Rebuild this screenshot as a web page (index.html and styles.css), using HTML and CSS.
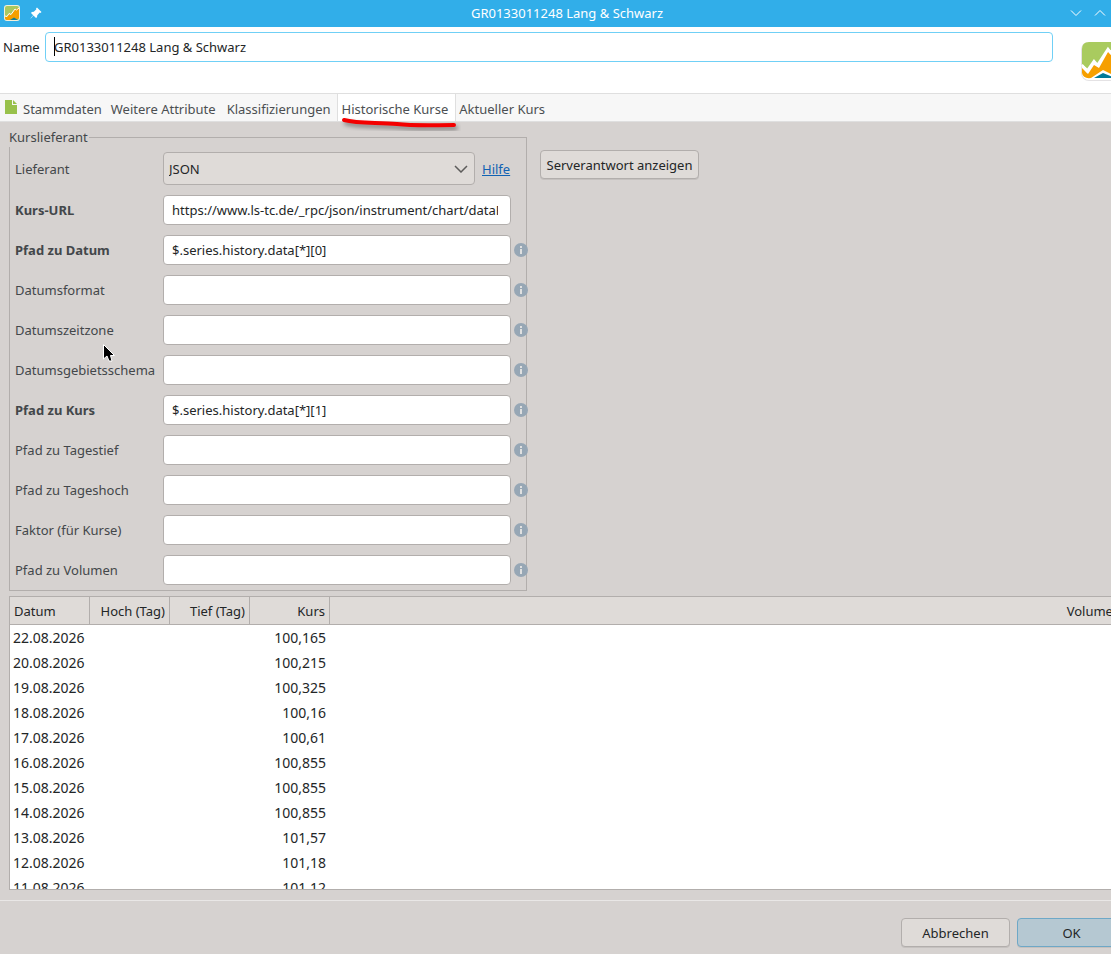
FILE: index.html
```html
<!DOCTYPE html>
<html lang="de">
<head>
<meta charset="utf-8">
<title>GR0133011248 Lang &amp; Schwarz</title>
<link rel="stylesheet" href="styles.css">
</head>
<body>
<svg class="defs" width="0" height="0" aria-hidden="true">
  <symbol id="logo" viewBox="0 0 40 40">
    <rect x="0" y="0" width="40" height="39" rx="8" fill="#e4e2e4"/>
    <rect x="1" y="0" width="38" height="38" rx="7" fill="#fff"/>
    <path d="M1 7Q1 0 8 0H32Q38 0 38 7V12L27 7L17 22L13 19L7 27L1 22Z" fill="#a9cb5f"/>
    <path d="M1 26L7 32L13 23L18 26L27 10L31 14L38 13V36L22 28L10 36Q2 37 1 31Z" fill="#f69f00"/>
    <path d="M13 36L22 31L34 36Z" fill="#007a99"/>
    <path d="M1 23L6 29L13 19L16.500 23L27 7L31 12L38 11" fill="none" stroke="#fff" stroke-width="2.500"/>
  </symbol>
  <symbol id="info" viewBox="0 0 14 14">
    <circle cx="7" cy="7" r="7" fill="#97a7b5"/>
    <path d="M6 3H8V5H6ZM6 6H8V11H6Z" fill="#dfe0e0"/>
  </symbol>
</svg>
<div class="window">
  <header class="titlebar">
    <div class="title-icons">
      <svg class="app-icon" viewBox="0 0 16 16">
        <rect x="0" y="0" width="16" height="16" rx="3" fill="#f4efd8"/>
        <rect x="1" y="1" width="14" height="14" rx="2" fill="#a9c860"/>
        <path d="M1 12L3 12L5 9L7 10L11 4L15 3V13L12 15H3Q1 15 1 12Z" fill="#f69f00"/>
        <path d="M1 11L3 11.500L5 8.500L7 9.500L11 4L12.500 5L15 3" fill="none" stroke="#fff" stroke-width="1"/>
        <path d="M6 15L10 12.500L14 15Z" fill="#157c94"/>
      </svg>
      <svg class="pin-icon" viewBox="0 0 12 12">
        <path d="M7 0.500L11.500 5L10.500 6L9.800 5.600L7.300 8.200L7 10.200L6 11L3.500 8.600L0.800 11.500L0.500 11.200L3.200 8.300L1 6L1.800 5L3.800 4.700L6.400 2.200L6 1.500Z" fill="#fff"/>
      </svg>
    </div>
    <h1 class="title">GR0133011248 Lang &amp; Schwarz</h1>
    <div class="title-buttons">
      <button class="win-btn" type="button" aria-label="Minimieren"><svg viewBox="0 0 12 12"><path d="M1 3.500L6 8.500L11 3.500"/></svg></button>
      <button class="win-btn" type="button" aria-label="Maximieren"><svg viewBox="0 0 12 12"><path d="M1 8.500L6 3.500L11 8.500"/></svg></button>
      <button class="win-btn" type="button" aria-label="Schließen"><svg viewBox="0 0 12 12"><path d="M1 1L11 11M11 1L1 11"/></svg></button>
    </div>
  </header>

  <div class="name-row">
    <label for="name">Name</label>
    <div class="name-field">
      <input class="field name-input" id="name" type="text" value="GR0133011248 Lang &amp; Schwarz">
      <span class="caret"></span>
    </div>
    <svg class="logo"><use href="#logo"/></svg>
  </div>

  <nav class="tabs">
    <button class="tab first" type="button"><svg class="doc-icon" viewBox="0 0 12 14"><path d="M0 0H7V5H12V14H0Z" fill="#98c14b"/><path d="M8 0L12 4H8Z" fill="#98c14b"/></svg>Stammdaten</button>
    <button class="tab" type="button">Weitere Attribute</button>
    <button class="tab" type="button">Klassifizierungen</button>
    <button class="tab active" type="button">Historische Kurse
      <svg class="marker" viewBox="0 0 122 18"><path d="M5 7C20 11 40 9 58 11S95 12 115 12" /></svg>
    </button>
    <button class="tab" type="button">Aktueller Kurs</button>
  </nav>

  <main class="content">
    <div class="top">
      <fieldset class="group">
        <legend>Kurslieferant</legend>
        <div class="row">
          <label for="provider">Lieferant</label>
          <div class="provider">
            <div class="select-wrap">
              <select class="select" id="provider"><option>JSON</option></select>
              <svg class="arrow" viewBox="0 0 14 8"><path d="M1 1L7 7L13 1"/></svg>
            </div>
            <a class="help" href="#">Hilfe</a>
          </div>
        </div>
        <div class="row"><label class="bold" for="url">Kurs-URL</label><input class="field url" id="url" type="text" value="https://www.ls-tc.de/_rpc/json/instrument/chart/dataForInstrument"></div>
        <div class="row"><label class="bold" for="f1">Pfad zu Datum</label><input class="field" id="f1" type="text" value="$.series.history.data[*][0]"><svg class="info"><use href="#info"/></svg></div>
        <div class="row"><label for="f2">Datumsformat</label><input class="field" id="f2" type="text"><svg class="info"><use href="#info"/></svg></div>
        <div class="row"><label for="f3">Datumszeitzone</label><input class="field" id="f3" type="text"><svg class="info"><use href="#info"/></svg></div>
        <div class="row"><label for="f4">Datumsgebietsschema</label><input class="field" id="f4" type="text"><svg class="info"><use href="#info"/></svg></div>
        <div class="row"><label class="bold" for="f5">Pfad zu Kurs</label><input class="field" id="f5" type="text" value="$.series.history.data[*][1]"><svg class="info"><use href="#info"/></svg></div>
        <div class="row"><label for="f6">Pfad zu Tagestief</label><input class="field" id="f6" type="text"><svg class="info"><use href="#info"/></svg></div>
        <div class="row"><label for="f7">Pfad zu Tageshoch</label><input class="field" id="f7" type="text"><svg class="info"><use href="#info"/></svg></div>
        <div class="row"><label for="f8">Faktor (für Kurse)</label><input class="field" id="f8" type="text"><svg class="info"><use href="#info"/></svg></div>
        <div class="row"><label for="f9">Pfad zu Volumen</label><input class="field" id="f9" type="text"><svg class="info"><use href="#info"/></svg></div>
      </fieldset>
      <button class="button response" type="button">Serverantwort anzeigen</button>
    </div>

    <div class="table-frame">
      <table class="quotes">
        <colgroup><col class="col"><col class="col"><col class="col"><col class="col"><col></colgroup>
        <thead><tr><th>Datum</th><th>Hoch (Tag)</th><th>Tief (Tag)</th><th>Kurs</th><th>Volumen</th></tr></thead>
        <tbody>
          <tr><td>22.08.2026</td><td></td><td></td><td>100,165</td><td></td></tr>
          <tr><td>20.08.2026</td><td></td><td></td><td>100,215</td><td></td></tr>
          <tr><td>19.08.2026</td><td></td><td></td><td>100,325</td><td></td></tr>
          <tr><td>18.08.2026</td><td></td><td></td><td>100,16</td><td></td></tr>
          <tr><td>17.08.2026</td><td></td><td></td><td>100,61</td><td></td></tr>
          <tr><td>16.08.2026</td><td></td><td></td><td>100,855</td><td></td></tr>
          <tr><td>15.08.2026</td><td></td><td></td><td>100,855</td><td></td></tr>
          <tr><td>14.08.2026</td><td></td><td></td><td>100,855</td><td></td></tr>
          <tr><td>13.08.2026</td><td></td><td></td><td>101,57</td><td></td></tr>
          <tr><td>12.08.2026</td><td></td><td></td><td>101,18</td><td></td></tr>
          <tr><td>11.08.2026</td><td></td><td></td><td>101,12</td><td></td></tr>
        </tbody>
      </table>
    </div>
  </main>

  <footer class="footer">
    <button class="button" type="button">Abbrechen</button>
    <button class="button primary" type="button">OK</button>
  </footer>

  <svg class="cursor" viewBox="0 0 14 20"><path d="M1.500 1.500V16L5 13L7 18H10L8.500 12.500H12.500Z" fill="#000" stroke="#fff" stroke-width="1"/></svg>
</div>
</body>
</html>
```
FILE: styles.css
```css
* { box-sizing: border-box; }

body {
  margin: 0;
  overflow: hidden;
  font: 13px/20px "Noto Sans", sans-serif;
  color: #232627;
  background: #d6d2d0;
}

button, input, select { font: inherit; color: inherit; }

.defs { position: absolute; }

/* The dialog is slightly wider than the viewport and runs off its right edge. */
.window {
  position: relative;
  display: flex;
  flex-direction: column;
  width: calc(100% + 25px);
  height: 100vh;
}

.titlebar {
  display: grid;
  grid-template-columns: 1fr auto 1fr;
  align-items: center;
  height: 27px;
  padding: 0 6px 1px 4px;
  background: #31aee9;
  color: #fff;
}
.title { margin: 0; font-size: 13px; font-weight: 400; }
.title-icons { display: flex; align-items: center; gap: 10px; }
.app-icon { width: 16px; height: 16px; }
.pin-icon { width: 12px; height: 12px; }
.title-buttons { display: flex; justify-content: flex-end; gap: 12px; }
.win-btn { width: 12px; height: 12px; padding: 0; border: 0; background: none; }
.win-btn svg { display: block; fill: none; stroke: #fff; }

.name-row {
  display: flex;
  align-items: flex-start;
  height: 66px;
  padding: 5px 15px 0 3px;
  background: #fff;
}
.name-row label { width: 42px; line-height: 30px; }
.name-field { position: relative; flex: 1; }
.logo { width: 40px; height: 40px; margin: 10px 0 0 28px; }
.caret { position: absolute; left: 9px; top: 5px; width: 1px; height: 19px; background: #000; }

.field {
  display: block;
  width: 100%;
  height: 30px;
  padding: 0 8px;
  border: 1px solid #b2aeac;
  border-radius: 4px;
  background: #fff;
  outline: 0;
}
.name-input { border-color: #70d0f6; }
.url { padding-right: 12px; }

.tabs {
  display: flex;
  height: 29px;
  border-top: 1px solid #dfdfdf;
  border-bottom: 1px solid #dfdfdf;
  background: #f7f7f7;
}
.tab {
  position: relative;
  display: flex;
  align-items: center;
  padding: 3px 6px 0 5px;
  border: 0;
  background: none;
  color: #4b4f52;
  white-space: nowrap;
}
.tab.first { padding-right: 4px; }
.tab.active { padding: 3px 7px 0 4px; border: solid #dfdfdf; border-width: 0 1px; background: #fff; }
.tab.active + .tab { padding-left: 3px; }
.doc-icon { width: 12px; height: 14px; margin: 0 6px 4px 0; }
.marker { position: absolute; left: 1px; top: 19px; z-index: 1; width: 122px; height: 18px; }
.marker path {
  fill: none;
  stroke: #f40000;
  stroke-width: 4;
  stroke-linecap: round;
  filter: drop-shadow(2px 3px 2px #0006);
}

.content {
  display: flex;
  flex: 1;
  flex-direction: column;
  gap: 5px;
  min-height: 0;
  padding: 5px 9px 0;
}
.top { display: flex; align-items: flex-start; gap: 13px; }

.group {
  width: 518px;
  min-width: 0;
  margin: 0;
  padding: 5px 0 5px 5px;
  border: 1px solid #b2aeac;
  color: #43474a;
}
.group legend { margin-left: -6px; padding: 0 1px 0 0; }
.row {
  display: grid;
  grid-template-columns: 148px minmax(0, 1fr) 15px;
  align-items: center;
}
.row + .row { margin-top: 10px; }
.row .field { color: #232627; }
.bold { font-weight: 700; }
.info { width: 14px; height: 14px; margin-left: 3px; }

.provider { display: flex; align-items: center; gap: 7px; }
.select-wrap { position: relative; flex: 1; }
.select {
  display: block;
  width: 100%;
  height: 33px;
  padding: 0 5px;
  border: 1px solid #b2aeac;
  border-radius: 4px;
  background: #dfdbd8;
  color: #232627;
  appearance: none;
}
.arrow {
  position: absolute;
  right: 7px;
  top: 13px;
  width: 14px;
  height: 8px;
  fill: none;
  stroke: #5d5c5b;
  stroke-width: 1.5;
  pointer-events: none;
}
.help { width: 29px; color: #1162b3; }

.button {
  width: 109px;
  height: 29px;
  padding: 0 4px;
  border: 1px solid #b2aeac;
  border-radius: 4px;
  background: #dfdbd8;
  box-shadow: 0 1px 0 #c5c1bf;
  white-space: nowrap;
}
.button.primary { border-color: #6ea8c7; background: #b5c8d2; }
.button.response { width: 159px; margin-top: 23px; }

.table-frame {
  flex: 1;
  min-height: 0;
  overflow: hidden;
  border: 1px solid #b2aeac;
  background: #fff;
}
.quotes { width: 100%; table-layout: fixed; border-collapse: separate; border-spacing: 0; }
.col { width: 80px; }
.quotes th {
  height: 28px;
  padding: 1px 4px 0;
  border: solid #b2aeac;
  border-width: 0 1px 1px 0;
  background: #dfdbd8;
  font-weight: 400;
  text-align: right;
  white-space: nowrap;
}
.quotes td { height: 25px; padding: 1px 4px 0 3px; font-size: 14px; text-align: right; }
.quotes th:first-child, .quotes td:first-child { text-align: left; }

.footer {
  display: flex;
  justify-content: flex-end;
  gap: 7px;
  margin-top: 10px;
  padding: 17px 10px 7px;
  border-top: 1px solid #e9e7e6;
}

.cursor { position: absolute; left: 102px; top: 343px; width: 14px; height: 20px; }
```
